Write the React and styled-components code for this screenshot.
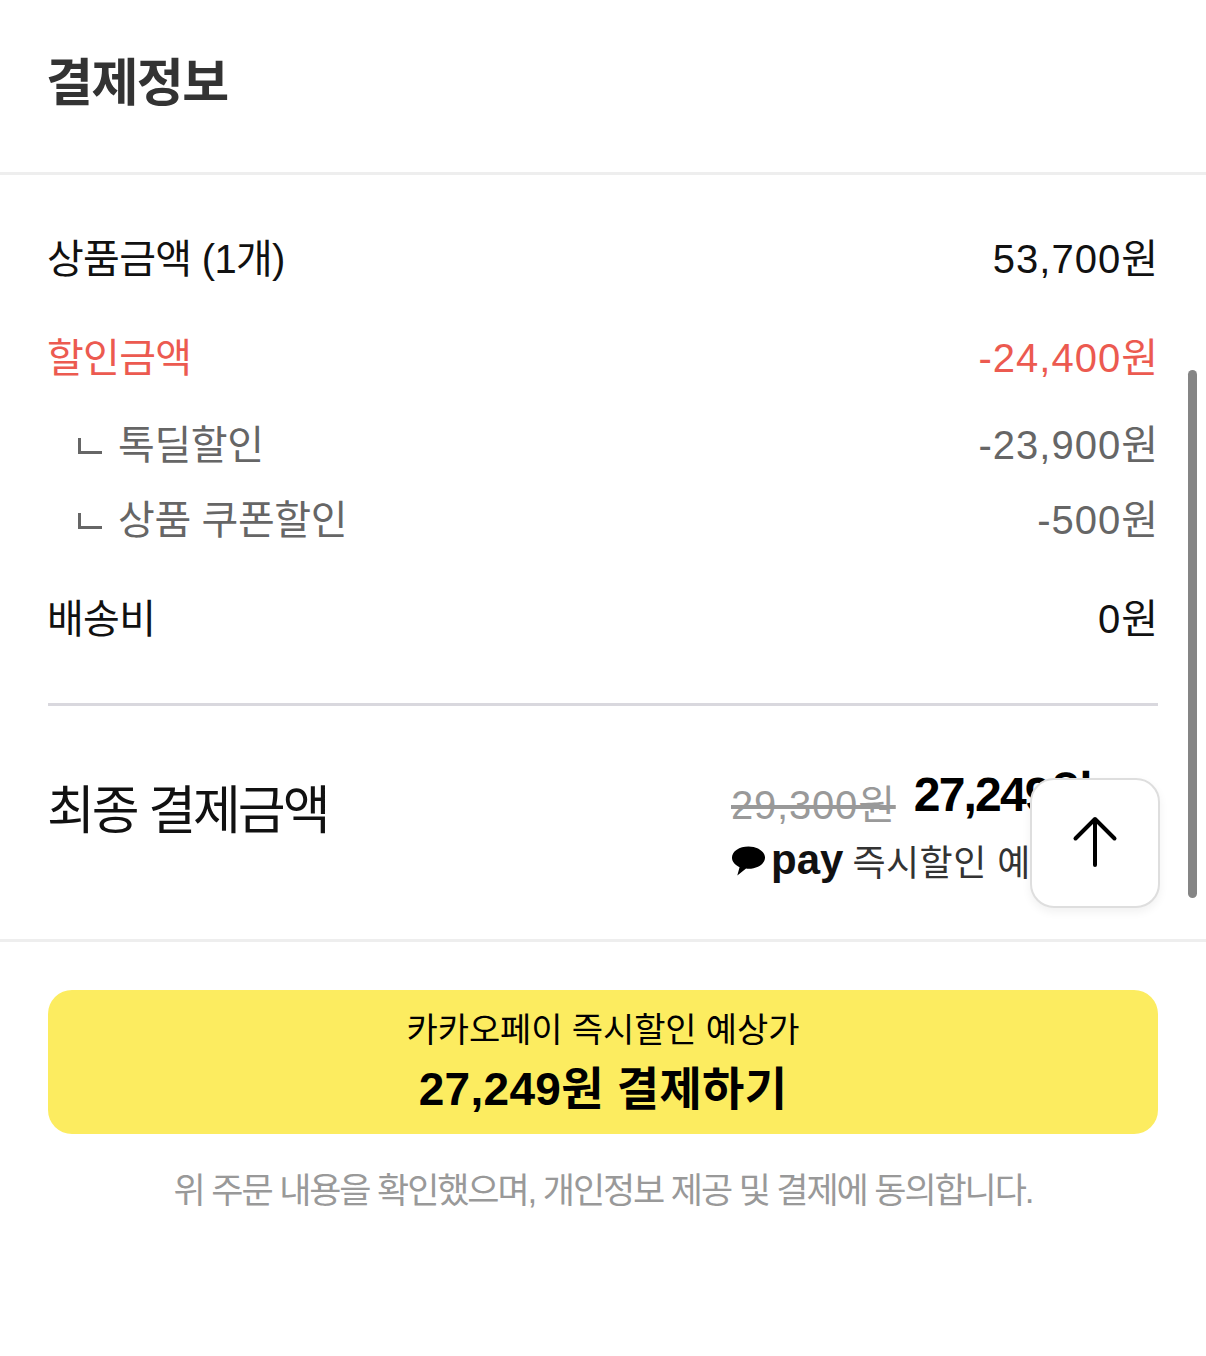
import React from 'react'
import styled, { createGlobalStyle } from 'styled-components'

const GlobalStyle = createGlobalStyle`
  html, body { margin: 0; padding: 0; background: #fff; }
  body { font-family: "Liberation Sans", "Noto Sans CJK KR", sans-serif; }
`

const Page = styled.div`
  position: relative;
  width: 1206px;
  height: 1356px;
  overflow: hidden;
`

const Header = styled.div`
  height: 175px;
  box-sizing: border-box;
  padding: 54px 48px 0;
  border-bottom: 3px solid #eeeeee;
`

const Title = styled.h2`
  margin: 0 0 0 -2px;
  font-size: 51px;
  line-height: 60px;
  font-weight: 700;
  letter-spacing: -1.5px;
  color: #333;
`

const Section = styled.div`
  padding: 55px 48px 0;
`

const Row = styled.div`
  display: flex;
  justify-content: space-between;
  align-items: center;
  height: 52px;
  margin-top: ${p => p.$gap || 0}px;
  font-size: 40px;
  color: ${p => (p.$tone === 'red' ? '#ec5a50' : p.$tone === 'gray' ? '#666' : '#111')};
`

const Label = styled.span`
  margin-left: -1px;
  letter-spacing: -0.7px;
`

const Value = styled.span`
  margin-right: -1px;
  letter-spacing: 1px;
`

const SubLabel = styled.span`
  display: flex;
  align-items: center;
  gap: 16px;
  padding-left: 30px;
  letter-spacing: -0.4px;
`

const Corner = styled.span`
  width: 24px;
  height: 16px;
  box-sizing: border-box;
  border-left: 3px solid #666;
  border-bottom: 3px solid #666;
  margin-top: 8px;
`

const Divider = styled.div`
  height: 3px;
  background: #d9d8de;
  margin-top: 61px;
`

const Total = styled.div`
  display: flex;
  justify-content: space-between;
  height: 236px;
  box-sizing: border-box;
  padding: 70px 48px 0;
  border-bottom: 3px solid #eeeeee;
  margin: 0 -48px;
`

const TotalLabel = styled.div`
  margin: 3px 0 0 -1px;
  font-size: 52px;
  line-height: 64px;
  letter-spacing: -3px;
  color: #111;
`

const TotalRight = styled.div`
  display: flex;
  flex-direction: column;
  width: 427px;
  flex-shrink: 0;
  white-space: nowrap;
`

const PriceLine = styled.div`
  display: flex;
  align-items: flex-start;
  gap: 18px;
  height: 46px;
`

const OldPrice = styled.s`
  font-size: 40px;
  line-height: 46px;
  margin-top: 6px;
  letter-spacing: 0.8px;
  color: #999;
`

const NewPrice = styled.b`
  font-size: 48px;
  line-height: 46px;
  margin-top: -4px;
  letter-spacing: -1.8px;
  color: #000;
`

const PayLine = styled.div`
  display: flex;
  align-items: center;
  gap: 9px;
  margin-top: 12px;
  font-size: 36px;
  letter-spacing: 0.5px;
  color: #333;
`

const PayMark = styled.span`
  display: flex;
  align-items: center;
  gap: 5px;
  font-size: 42px;
  font-weight: 700;
  line-height: 40px;
  letter-spacing: 0;
  color: #111;
`

const Pay = styled.div`
  padding: 48px 48px 0;
`

const PayButton = styled.button`
  display: flex;
  flex-direction: column;
  align-items: center;
  justify-content: center;
  width: 100%;
  height: 144px;
  padding: 2px 0 0;
  border: 0;
  border-radius: 24px;
  background: #fcec60;
  font-family: inherit;
  color: #000;
`

const ButtonHint = styled.span`
  font-size: 34px;
  line-height: 44px;
  letter-spacing: -0.1px;
`

const ButtonMain = styled.span`
  font-size: 46px;
  line-height: 60px;
  margin-top: 7px;
  font-weight: 700;
  letter-spacing: 0.3px;
`

const Notice = styled.p`
  margin: 33px 0 0;
  text-align: center;
  font-size: 35px;
  line-height: 48px;
  letter-spacing: -2.1px;
  color: #999;
`

const TopButton = styled.button`
  position: absolute;
  left: 1030px;
  top: 778px;
  width: 130px;
  height: 130px;
  box-sizing: border-box;
  display: flex;
  align-items: center;
  justify-content: center;
  padding: 0;
  background: #fff;
  border: 2px solid #dedede;
  border-radius: 24px;
  box-shadow: 0 4px 10px rgba(0, 0, 0, 0.06);
`

const Scrollbar = styled.div`
  position: absolute;
  left: 1188px;
  top: 370px;
  width: 9px;
  height: 528px;
  border-radius: 5px;
  background: #858585;
`

export default function App() {
  return (
    <Page>
      <GlobalStyle />
      <Header><Title>결제정보</Title></Header>
      <Section>
        <Row><Label>상품금액 (1개)</Label><Value>53,700원</Value></Row>
        <Row $tone="red" $gap={47}><Label>할인금액</Label><Value>-24,400원</Value></Row>
        <Row $tone="gray" $gap={35}><SubLabel><Corner />톡딜할인</SubLabel><Value>-23,900원</Value></Row>
        <Row $tone="gray" $gap={23}><SubLabel><Corner />상품 쿠폰할인</SubLabel><Value>-500원</Value></Row>
        <Row $gap={47}><Label>배송비</Label><Value>0원</Value></Row>
        <Divider />
        <Total>
          <TotalLabel>최종 결제금액</TotalLabel>
          <TotalRight>
            <PriceLine><OldPrice>29,300원</OldPrice><NewPrice>27,249원</NewPrice></PriceLine>
            <PayLine>
              <PayMark>
                <svg width="35" height="34" viewBox="0 0 36 34"><path fill="#000" d="M18 3C8.600 3 1 8 1 14.500c0 4.200 3.100 7.800 7.800 9.900L6.500 33l9-7.200c.8.100 1.700.200 2.500.200 9.400 0 17-5.200 17-11.500S27.400 3 18 3z" /></svg>
                pay
              </PayMark>
              즉시할인 예상가
            </PayLine>
          </TotalRight>
        </Total>
      </Section>
      <Pay>
        <PayButton>
          <ButtonHint>카카오페이 즉시할인 예상가</ButtonHint>
          <ButtonMain>27,249원 결제하기</ButtonMain>
        </PayButton>
        <Notice>위 주문 내용을 확인했으며, 개인정보 제공 및 결제에 동의합니다.</Notice>
      </Pay>
      <Scrollbar />
      <TopButton aria-label="맨 위로">
        <svg width="48" height="54" viewBox="0 0 48 54" fill="none" stroke="#000" strokeWidth="4" strokeLinecap="round" strokeLinejoin="round"><path d="M24 49V3M4.500 22.500 24 3l19.500 19.500" /></svg>
      </TopButton>
    </Page>
  )
}
